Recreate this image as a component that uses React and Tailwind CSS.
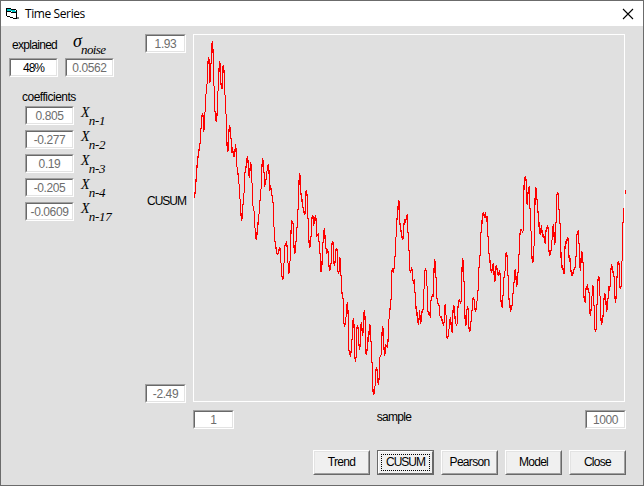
import React from "react";

// One entry per sample column; a pair is [entry, exit] for columns that travel far
const cusum = [
  198, 188, 174, 160, 154, 146, [142, 129], [128, 118], 113, [119, 132],
  [128, 113], [111, 95], [93, 85], [83, 68], 57, [62, 83], [80, 64], [63, 44], 42, [60, 85],
  [87, 111], [112, 119], 122, [108, 92], [90, 78], 62, [64, 80], 88, [88, 68], 65,
  [77, 94], [96, 113], [115, 136], 152, [149, 136], 125, [131, 138], [139, 153], 147, 157,
  [149, 157], 144, [155, 166], [168, 174], [174, 183], [185, 198], [200, 209], 220, [218, 205], [204, 194],
  [192, 175], 171, 163, 156, [167, 175], 177, 163, [165, 182], [184, 205], [207, 210],
  [212, 227], [229, 237], 240, [228, 222], [225, 215], [213, 201], [200, 190], [188, 172], 159, [161, 170],
  [175, 187], 182, [177, 172], [170, 166], 165, [179, 191], 187, [190, 195], [196, 202], [203, 226],
  [228, 240], 243, 253, 254, 253, 247, [250, 262], [264, 274], 279, [278, 264],
  [262, 247], 244, 242, [250, 262], [264, 274], [271, 262], [260, 240], [225, 220], 222, [225, 239],
  254, [251, 242], [241, 228], [227, 210], [209, 192], 174, [176, 192], 196, 205, 210,
  214, [213, 194], 190, [200, 218], [219, 235], 247, [246, 237], [236, 221], 215, [219, 226],
  222, 215, [224, 236], 235, [234, 241], [242, 253], [254, 271], 271, [256, 243], [242, 231],
  229, [244, 248], [249, 254], 249, [255, 261], 271, [268, 264], [263, 247], 241, [244, 261],
  266, [258, 252], 248, [252, 271], 273, [270, 257], [259, 275], [276, 293], [293, 298], [299, 320],
  327, [323, 318], [316, 308], 302, [321, 347], 354, 356, [348, 340], [339, 323], 318,
  [334, 357], 360, [355, 328], 326, [330, 340], 350, [341, 327], 322, 336, [327, 313],
  311, [325, 351], 355, [345, 337], 342, 324, [328, 341], [342, 362], [363, 386], 395,
  [392, 387], [385, 370], 368, [372, 382], 384, [374, 358], 356, [354, 342], 326, [331, 341],
  355, [353, 344], 346, 347, [334, 320], [318, 308], [310, 300], [299, 274], 268, 271,
  [266, 257], [256, 238], [236, 222], 216, 200, [203, 221], 227, 234, 240, [237, 228],
  220, 222, 217, [214, 232], [233, 250], [251, 268], 273, 268, [270, 279], 282,
  [279, 292], [293, 306], [311, 306], 322, 324, [314, 310], 323, [321, 314], 310, [309, 290],
  [288, 273], 268, [273, 285], [287, 308], 315, 312, [318, 303], 298, 295, [297, 281],
  260, [262, 277], [278, 295], 302, 305, [306, 315], 317, 317, 323, 325,
  [320, 306], [305, 314], [316, 335], 339, [335, 330], [328, 322], 317, 329, [333, 317], 306,
  [307, 312], 323, 325, [323, 311], 303, 299, 304, [300, 282], 258, [263, 281],
  [282, 307], 326, [323, 312], 307, [309, 324], 332, [329, 322], [321, 311], [310, 301], 297,
  [302, 307], 311, [309, 302], [300, 291], [290, 268], [267, 256], [255, 235], 230, 215, 212,
  218, 212, 222, [216, 236], [237, 251], 256, 267, 273, 267, 263,
  282, [279, 269], 265, 273, 276, 270, [277, 296], 306, [307, 296], [295, 278],
  [277, 272], [270, 256], 252, [259, 275], [276, 297], 301, 312, 308, [303, 294], [293, 283],
  [282, 272], 269, 286, [284, 273], [272, 255], [254, 238], 230, 230, 232, [230, 198],
  178, 177, [183, 203], [204, 198], 188, [187, 208], [209, 230], [232, 252], 263, [260, 247],
  [245, 217], 188, [189, 199], [200, 209], 215, 233, 234, 225, 237, 234,
  240, [244, 235], 228, 226, [230, 246], 256, 253, [248, 241], [239, 227], 225,
  244, [242, 223], [222, 197], 192, [196, 209], [210, 223], [224, 241], 268, 265, 273,
  [273, 253], 242, 243, 237, [241, 251], 262, [258, 267], 275, 275, 271,
  268, [267, 257], [256, 237], 232, [231, 243], [244, 263], 271, 251, [255, 262], [263, 293],
  301, [302, 291], 287, 285, 292, [293, 313], 315, [305, 297], [295, 285], [287, 305],
  [306, 327], 332, [327, 305], [304, 284], 277, [278, 295], [297, 315], 324, [322, 319], [313, 304],
  294, 295, 311, [309, 299], [298, 286], 289, [285, 274], 265, 267, 276,
  [277, 292], 303, [292, 282], [272, 264], 261, [267, 287], 288, [285, 262], [260, 223], [222, 208],
];

const points = cusum
  .flatMap((v, i) => [v].flat().map((y) => `${i + 194.5},${y}`))
  .join(" ");

const coefficients = [
  { value: "0.805", lag: "n-1" },
  { value: "-0.277", lag: "n-2" },
  { value: "0.19", lag: "n-3" },
  { value: "-0.205", lag: "n-4" },
  { value: "-0.0609", lag: "n-17" },
];

const buttons = ["Trend", "CUSUM", "Pearson", "Model", "Close"];

const Field = ({ children, wide, active }) => (
  <div
    className={`h-[19px] shrink-0 border border-t-[#a0a0a0] border-l-[#a0a0a0] border-r-white border-b-white ${
      wide ? "w-[49px]" : "w-[41px]"
    }`}
  >
    <div
      className={`h-full border border-t-[#696969] border-l-[#696969] border-r-[#e3e3e3] border-b-[#e3e3e3] bg-white text-center leading-[16px] ${
        active ? "text-black tracking-[-1px]" : "text-[#6d6d6d] tracking-[-0.4px]"
      }`}
    >
      {children}
    </div>
  </div>
);

const Button = ({ label, focused }) => (
  <button
    className={`h-[25px] w-[57px] border text-center ${
      focused
        ? "border-[#696969] tracking-[-1px]"
        : "border-t-white border-l-white border-r-[#696969] border-b-[#696969] tracking-[-0.7px]"
    }`}
  >
    <span
      className={`flex h-full items-center justify-center border bg-[#f0f0f0] ${
        focused
          ? "border-t-white border-l-white border-r-[#696969] border-b-[#696969] p-[2px]"
          : "border-t-[#e3e3e3] border-l-[#e3e3e3] border-r-[#a0a0a0] border-b-[#a0a0a0]"
      }`}
    >
      <span
        className={`flex items-center justify-center ${
          focused ? "h-full w-full border border-dotted border-black" : ""
        }`}
      >
        {label}
      </span>
    </span>
  </button>
);

const AppIcon = () => (
  <svg width="14" height="12" viewBox="0 0 14 12" shapeRendering="crispEdges">
    <path d="M1 1h4v1h4v1h2v7H9V9H5V8H1z" fill="#fff" />
    <path d="M1 1h4v1h4v1h1v1H6V3H1z" fill="#00c8c8" />
    <path
      d="M0 0h5v1H0zM5 1h5v1H5zM0 1h1v7H0zM1 3h4v1H1zM5 4h5v1H5zM10 2h1v9h-1zM1 8h3v1H1zM4 9h3v1H4zM7 10h3v1H7z"
      fill="#000"
    />
    <path d="M11 9h2v2h-2z" fill="#808080" />
  </svg>
);

const App = () => {
  return (
    <div className="flex h-[486px] w-[644px] flex-col overflow-hidden border border-[#6b6b6b] bg-[#e0e0e0] font-['Liberation_Sans',sans-serif] text-[12px] leading-[13px] tracking-[-0.7px] text-black">
      {/* Title bar */}
      <div className="flex h-[25px] shrink-0 items-center bg-white pr-[9px] pl-[5px]">
        <AppIcon />
        <span className="ml-[5px] font-['Open_Sans',sans-serif] text-[12px] leading-[16px] tracking-[-0.4px]">
          Time Series
        </span>
        <svg className="ml-auto" width="12" height="12" viewBox="0 0 12 12">
          <path d="M1 1l10 10M11 1L1 11" stroke="#000" strokeWidth="1.1" />
        </svg>
      </div>

      <div className="flex">
        {/* Model summary */}
        <div className="w-[144px] shrink-0 pt-[8px] pl-[8px]">
          <div className="flex gap-[7px]">
            <div className="w-[49px]">
              <div className="h-[24px] pt-[5px] pl-[3px]">explained</div>
              <Field wide active>48%</Field>
            </div>
            <div className="w-[49px]">
              <div className="flex h-[24px] pl-[8px] font-['Liberation_Serif',serif] italic">
                <span className="w-[8px] text-[18px] leading-[15px]">σ</span>
                <span className="pt-[9px] text-[13px] leading-[13px] font-medium tracking-[-0.6px]">
                  noise
                </span>
              </div>
              <Field wide>0.0562</Field>
            </div>
          </div>

          <div className="mt-[14px] ml-[13px] tracking-[-0.5px]">coefficients</div>
          <div className="mt-[2px] ml-[16px] flex flex-col gap-[5px]">
            {coefficients.map((c) => (
              <div key={c.lag} className="flex h-[19px]">
                <Field wide>{c.value}</Field>
                <span className="ml-[7px] flex font-['Liberation_Serif',serif] text-[14px] italic">
                  <span>X</span>
                  <span className="pt-[8px] text-[13px] tracking-[-0.3px]">{c.lag}</span>
                </span>
              </div>
            ))}
          </div>
        </div>

        {/* Vertical axis */}
        <div className="mt-[8px] flex h-[369px] w-[48px] shrink-0 flex-col">
          <Field>1.93</Field>
          <div className="mt-[142px] pl-[2px] tracking-[-1px]">CUSUM</div>
          <div className="mt-auto">
            <Field>-2.49</Field>
          </div>
        </div>

        {/* Chart */}
        <div className="mt-[8px] w-[433px]">
          <div className="h-[368px] w-[432px] border border-white">
            <svg
              className="block overflow-visible"
              width="430"
              height="366"
              viewBox="194 35 430 366"
              shapeRendering="crispEdges"
            >
              <polyline points={points} fill="none" stroke="#f00" strokeWidth="1.25" />
              <path d="M625.5 190v4" stroke="#f00" />
            </svg>
          </div>
          <div className="mt-[8px] flex justify-between">
            <Field>1</Field>
            <span className="mt-[1px] mr-[31px]">sample</span>
            <Field>1000</Field>
          </div>
        </div>
      </div>

      <div className="mt-[21px] mr-[17px] flex justify-end gap-[7px]">
        {buttons.map((label) => (
          <Button key={label} label={label} focused={label === "CUSUM"} />
        ))}
      </div>
    </div>
  );
};

export default App;
